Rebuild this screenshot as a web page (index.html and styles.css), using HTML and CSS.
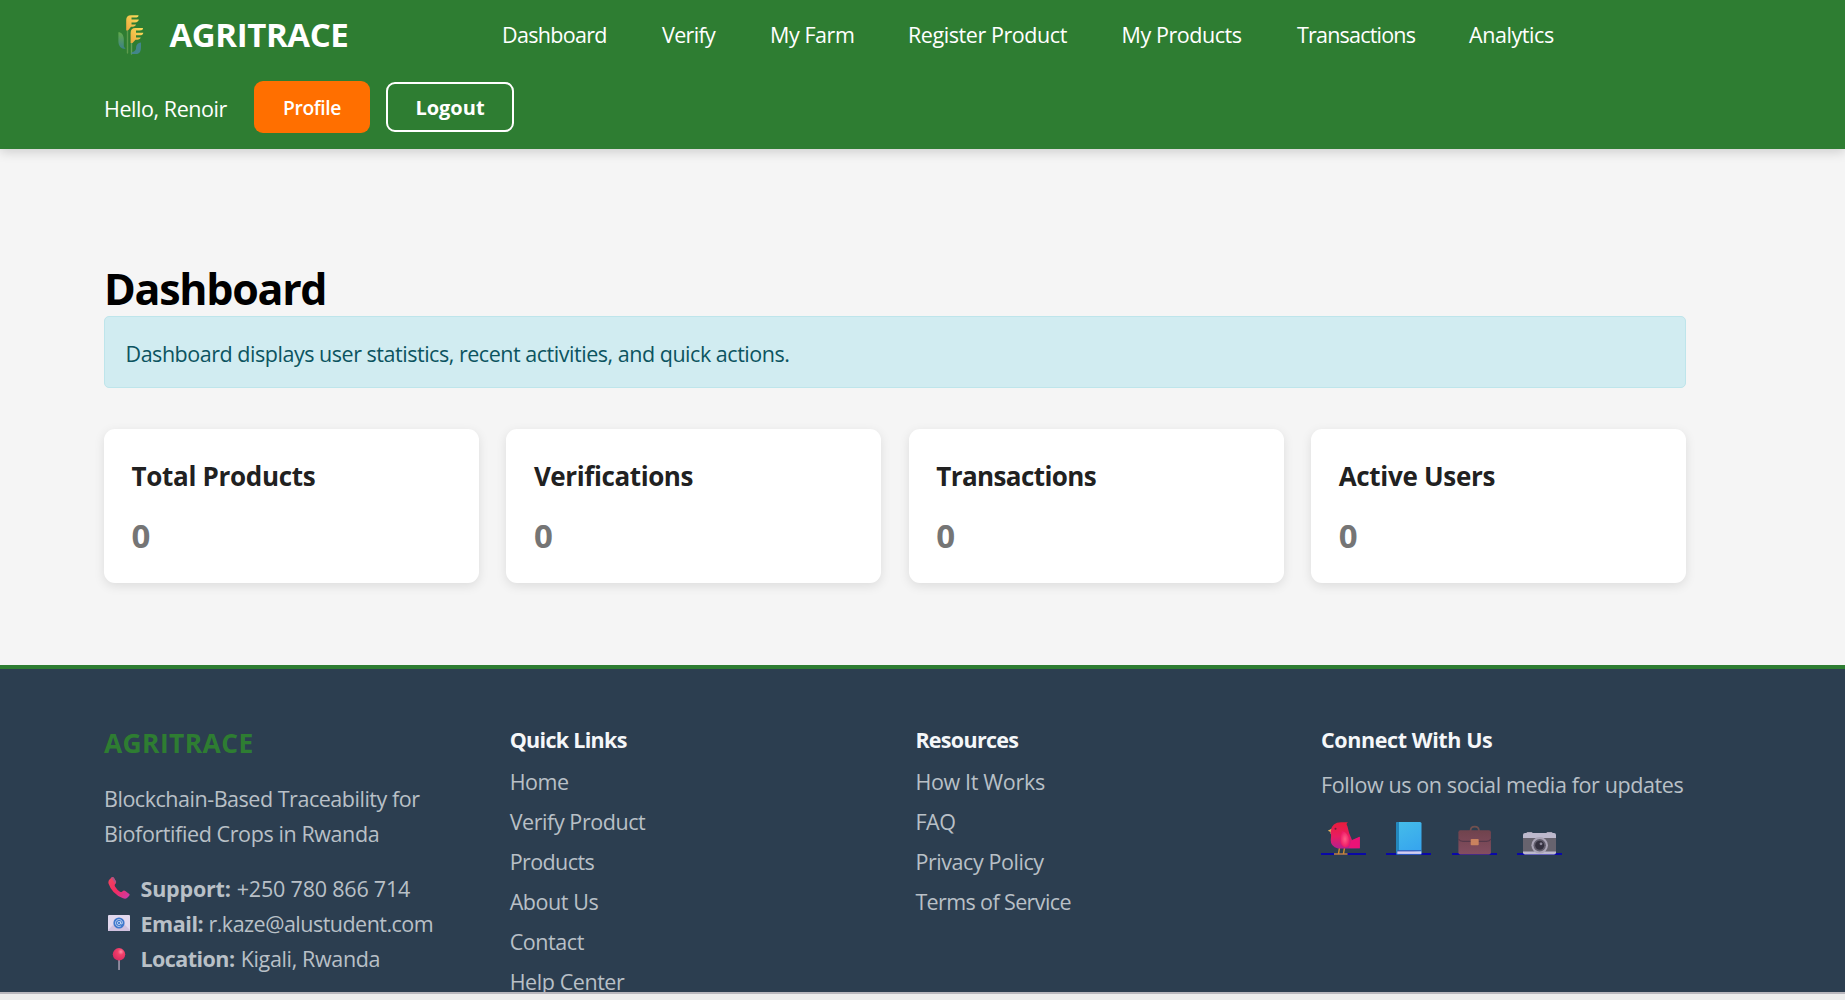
FILE: index.html
```html
<!DOCTYPE html>
<html lang="en">
<head>
<meta charset="utf-8">
<title>AGRITRACE - Dashboard</title>
<link rel="stylesheet" href="styles.css">
</head>
<body>
<div class="page">
  <header class="header">
    <div class="bar">
      <a class="brand">
        <svg class="logo" viewBox="0 0 60 60" fill="none" stroke-linecap="round" stroke-linejoin="round">
          <defs>
            <linearGradient id="leaf" x1="0" y1="0" x2="0" y2="1"><stop offset="0" stop-color="#62a94c"/><stop offset="1" stop-color="#3d7f86"/></linearGradient>
            <linearGradient id="ear" x1="0" y1="1" x2="1" y2="0"><stop offset="0" stop-color="#eda83e"/><stop offset="1" stop-color="#fbe05c"/></linearGradient>
          </defs>
          <path d="M22.5 26V48" stroke="#5c9a4c" stroke-width="1.4"/>
          <path d="M26.5 38V49" stroke="#63a05a" stroke-width="1.4"/>
          <path d="M13.4 27.3C16.5 27.3 18.6 30 18.8 34V41.5L20.6 44C16 44 13.4 41 13.4 36.500Z" fill="url(#leaf)"/>
          <path d="M36 37.500C32 38 31 40.500 31 44C30 46.500 28 47 26.500 47.500V49H31C34.500 49 36 46.500 36 42Z" fill="#42868a"/>
          <path d="M21.200 25.500V15Q21.200 10.200 26 10.200H33.500Q33.800 12.600 30 12.600H26.500V14.600H33.800Q33.500 17.400 30 17.400H26.500V19.400H31Q30.500 21.700 26 21.700L23 25.500Z" fill="url(#ear)"/>
          <path d="M25.600 38V28Q25.600 23 30.400 23H38Q38.200 25.500 34.500 25.500H31V27.700H38.300Q38 30.300 34.500 30.300H31V32.400H35.700Q35.200 34.700 30.500 34.700L27.500 38Z" fill="url(#ear)"/>
        </svg>
        <span class="brand-name">AGRITRACE</span>
      </a>
      <nav class="nav">
        <a class="snug">Dashboard</a><a class="snug">Verify</a><a>My Farm</a><a>Register Product</a><a>My Products</a><a class="tight">Transactions</a><a>Analytics</a>
      </nav>
    </div>
    <div class="user">
      <span class="hello">Hello, Renoir</span>
      <a class="btn btn-profile">Profile</a>
      <button class="btn btn-logout">Logout</button>
    </div>
  </header>

  <main class="main">
    <h1>Dashboard</h1>
    <div class="alert">Dashboard displays user statistics, recent activities, and quick actions.</div>
    <div class="cards">
      <section class="card"><h3 class="wide">Total Products</h3><p>0</p></section>
      <section class="card"><h3>Verifications</h3><p>0</p></section>
      <section class="card"><h3 class="snug">Transactions</h3><p>0</p></section>
      <section class="card"><h3 class="wide">Active Users</h3><p>0</p></section>
    </div>
  </main>

  <footer class="footer">
    <div class="col about">
      <h3>AGRITRACE</h3>
      <p class="tagline">Blockchain-Based Traceability for<br><span class="wide">Biofortified Crops in Rwanda</span></p>
      <ul class="contact">
        <li>
          <svg viewBox="0 0 22 22"><defs><linearGradient id="ph" x1="0" y1="0" x2="1" y2="1"><stop offset="0" stop-color="#f0475f"/><stop offset=".5" stop-color="#f22c62"/><stop offset="1" stop-color="#c93cae"/></linearGradient></defs><path d="M1.500 2.500L3.800.3Q5-.3 6 1L8 4.500Q8.500 6 7 7.200Q6.300 8.200 7.200 9.800Q9 12.800 12 14.800Q13.300 15.500 14.300 14.500Q15.800 13 17.300 14L21 16.700Q22.300 17.800 21 19L19 21Q17.500 22.200 15 21.300Q4 17 .5 6.500Q0 4 1.500 2.500Z" fill="url(#ph)"/><path d="M3.800.3Q5-.3 6 1L8 4.500Q8.300 5.500 7.400 6.600L3.400.8Z" fill="#a95587"/></svg>
          <span><strong class="loose">Support:</strong> <span class="num">+250 780 866 714</span></span>
        </li>
        <li>
          <svg viewBox="0 0 22 22"><rect y="3" width="22" height="16" rx="1" fill="#e2d8ee"/><path d="M0 18V19H22V18L15 11H7Z" fill="#d0c1df"/><circle cx="11" cy="11" r="5.600" fill="#3f78cc"/><circle cx="11" cy="11" r="1.600" fill="none" stroke="#cfdef6" stroke-width=".8"/><path d="M12.700 9.300V11.500Q14.200 13 14.500 10.800A3.500 3.500 0 1 0 12.800 14" fill="none" stroke="#cfdef6" stroke-width=".8"/></svg>
          <span><strong>Email:</strong> <span class="mail">r.kaze@alustudent.com</span></span>
        </li>
        <li>
          <svg viewBox="0 0 22 22"><defs><radialGradient id="pin" cx=".65" cy=".3" r=".7"><stop offset="0" stop-color="#ff8da6"/><stop offset=".35" stop-color="#f2406a"/><stop offset="1" stop-color="#d92c62"/></radialGradient></defs><rect x="10.200" y="11" width="1.700" height="11" rx=".6" fill="#9a94a8"/><circle cx="11" cy="6.300" r="6.200" fill="url(#pin)"/></svg>
          <span><strong class="place">Location:</strong> <span class="city">Kigali, Rwanda</span></span>
        </li>
      </ul>
    </div>
    <div class="col">
      <h4 class="snug">Quick Links</h4>
      <ul class="links"><li>Home</li><li>Verify Product</li><li class="tight">Products</li><li>About Us</li><li>Contact</li><li>Help Center</li></ul>
    </div>
    <div class="col">
      <h4 class="snug">Resources</h4>
      <ul class="links"><li class="wide">How It Works</li><li>FAQ</li><li>Privacy Policy</li><li class="service">Terms of Service</li></ul>
    </div>
    <div class="col">
      <h4>Connect With Us</h4>
      <p class="follow">Follow us on social media for updates</p>
      <div class="social">
        <a><svg viewBox="0 0 45 36"><defs><linearGradient id="bird" x1="0" y1="0" x2="0" y2="1"><stop offset="0" stop-color="#e81d3c"/><stop offset=".55" stop-color="#e81c62"/><stop offset="1" stop-color="#b3208f"/></linearGradient><radialGradient id="wing"><stop offset="0" stop-color="#ff5f86"/><stop offset="1" stop-color="#ee1a68"/></radialGradient></defs><path d="M18.500 29L17.500 34.500M23.500 29L22.500 34.500M13 35H26.500" stroke="#c98a2e" stroke-width="1.400" fill="none"/><path d="M11 9.500L6.800 11.700L9.500 13V15L12 13Z" fill="#e8b35b"/><path d="M27 3.300Q24.500 4.500 26.500 7.500Q27.500 14 31 21L38.800 17.700V29.300L31 29.500H17Q9.500 27.500 9.700 21Q10.500 17 9.700 12Q11 3.300 20 3.300Z" fill="url(#bird)"/><path d="M21 12Q27 13 28.500 22Q29 29 23 28Q17 25 21 12Z" fill="url(#wing)"/><path d="M30 22L38.800 17.700V29.300L28 29Z" fill="#ec1277"/><circle cx="14.500" cy="9.700" r="1" fill="#6e2038"/></svg></a>
        <a><svg viewBox="0 0 45 36"><defs><linearGradient id="book" x1="0" y1="0" x2=".4" y2="1"><stop offset="0" stop-color="#45bde9"/><stop offset="1" stop-color="#37a6ee"/></linearGradient></defs><rect x="10" y="3" width="25.500" height="32.500" rx="1.500" fill="url(#book)"/><path d="M10 4.500Q10 3 11.500 3H13V35.500H11.500Q10 35.500 10 34Z" fill="#2387bd"/><path d="M35.500 32V31.300H12Q10.500 32 10.500 34Q10.500 35.500 12 35.500H35.500V34.700H12Z" fill="#3552b4"/><rect x="11.300" y="32.400" width="24" height="2.500" fill="#d3ccf0"/></svg></a>
        <a><svg viewBox="0 0 45 36"><defs><linearGradient id="bag" x1="0" y1="0" x2="0" y2="1"><stop offset="0" stop-color="#70434d"/><stop offset="1" stop-color="#844e61"/></linearGradient></defs><path d="M18.500 12Q18.500 7.700 22.700 7.700T27 12" fill="none" stroke="#70504f" stroke-width="1.700"/><rect x="6.400" y="11.300" width="32.500" height="24.200" rx="2" fill="url(#bag)"/><path d="M6.400 20Q8 22.300 11 22.300H34.500Q37.500 22.300 38.900 20" fill="none" stroke="#56384a" stroke-width="1.200"/><rect x="18.700" y="20" width="8" height="6.300" rx=".8" fill="#c9825e"/></svg></a>
        <a><svg viewBox="0 0 45 36"><rect x="9.500" y="13" width="6" height="3" rx="1" fill="#aaa6b8"/><rect x="29.500" y="13" width="6" height="3" rx="1" fill="#aaa6b8"/><rect x="6" y="14" width="33" height="21.500" rx="2" fill="#bdb9cd"/><rect x="6" y="19" width="33" height="13.500" fill="#67636e"/><circle cx="22.700" cy="26.300" r="8.300" fill="#aaa4b6"/><circle cx="22.700" cy="26.300" r="6.200" fill="#625e6d"/><circle cx="22.700" cy="26.300" r="4.500" fill="#34303f"/><circle cx="24" cy="24.800" r="1.400" fill="#8e899c"/></svg></a>
      </div>
    </div>
  </footer>
</div>
<div class="tray"></div>
</body>
</html>
```
FILE: styles.css
```css
* { box-sizing: border-box; margin: 0; padding: 0; }

body {
  height: 1000px;
  overflow: hidden;
  background: #f5f5f5;
  font-family: "Open Sans", "Noto Sans", sans-serif;
  font-size: 21.5px;
  line-height: 35.2px;
  letter-spacing: -0.43px;
}

ul { list-style: none; }

.page { height: 992px; overflow: hidden; }
.tray { height: 8px; background: #ededed; border-top: 2px solid #b9b7bd; }

/* Letter fitting */
.wide { letter-spacing: -0.33px; }
.tight { letter-spacing: -0.6px; }
.snug { letter-spacing: -0.68px; }
.service { letter-spacing: -0.62px; }

/* Header */
.header {
  height: 149px;
  padding-left: 104px;
  background: #2e7d32;
  color: #fff;
  box-shadow: 0 3px 11px rgba(0, 0, 0, 0.16);
}
.bar { display: flex; align-items: center; height: 81px; padding-bottom: 12px; }
.brand { display: flex; align-items: center; width: 398px; }
.logo { width: 60px; height: 60px; margin: 1px 4.500px 0 1px; }
.brand-name { font-size: 33px; font-weight: 700; letter-spacing: -0.4px; }
.nav {
  display: grid;
  grid-template-columns: 160px 108px 138px 213.500px 175.500px 172px auto;
}
.nav .tight { letter-spacing: -0.8px; }
.user { display: flex; align-items: center; height: 52px; }
.hello { width: 150px; padding-top: 4px; letter-spacing: -0.43px; }
.btn {
  display: flex;
  align-items: center;
  justify-content: center;
  padding-top: 2px;
  border: 0;
  border-radius: 9px;
  color: #fff;
  font-family: inherit;
  line-height: 30px;
}
.btn-profile {
  width: 116px;
  height: 52px;
  margin-right: 16px;
  background: #ff6f00;
  font-size: 19.300px;
  font-weight: 600;
  letter-spacing: -0.4px;
}
.btn-logout {
  width: 128px;
  height: 50px;
  border: 2px solid #fff;
  background: none;
  font-size: 20px;
  font-weight: 700;
  letter-spacing: 0;
}

/* Dashboard */
.main { height: 516px; width: 1686px; padding: 113px 0 0 104px; }
h1 {
  height: 54px;
  font-size: 43px;
  line-height: 54px;
  font-weight: 700;
  letter-spacing: -1.300px;
  color: #000;
}
.alert {
  height: 72px;
  padding: 19px 20.500px;
  border: 1px solid #bee5eb;
  border-radius: 5px;
  background: #d1ecf1;
  color: #0c5460;
  letter-spacing: -0.47px;
}
.cards {
  display: grid;
  grid-template-columns: repeat(4, 1fr);
  gap: 27.500px;
  margin-top: 41px;
}
.card {
  height: 154px;
  padding: 30px 27.500px;
  border-radius: 11px;
  background: #fff;
  box-shadow: 0 3px 11px rgba(0, 0, 0, 0.1);
}
.card h3 { font-size: 26px; letter-spacing: -0.4px; color: #212121; }
.card h3.wide { letter-spacing: -0.3px; }
.card h3.snug { letter-spacing: -0.6px; }
.card p {
  margin-top: 23.500px;
  font-size: 33px;
  font-weight: 700;
  color: #757575;
}

/* Footer */
.footer {
  display: grid;
  grid-template-columns: repeat(4, 365px);
  column-gap: 40.700px;
  height: 340px;
  padding: 53px 0 0 104px;
  border-top: 4px solid #2e7d32;
  background: #2c3e50;
  color: #b9c0c7;
}
.about h3 {
  padding-top: 4px;
  font-size: 26.400px;
  letter-spacing: 0.4px;
  color: #2e7d32;
}
.tagline { margin-top: 20px; letter-spacing: -0.47px; }
.tagline .wide { letter-spacing: -0.4px; }
.contact { margin-top: 19px; }
.contact li { display: flex; align-items: center; }
.contact svg { width: 22px; height: 22px; margin: 0 10.500px 0 4px; }
.contact .loose { letter-spacing: -0.2px; }
.contact .num { margin-left: 1px; letter-spacing: -0.2px; }
.contact .mail { letter-spacing: -0.52px; }
.contact .place { letter-spacing: -0.55px; }
.contact .city { margin-left: 1px; letter-spacing: -0.35px; }
h4 { color: #f5f7f9; letter-spacing: -0.4px; }
h4.snug { letter-spacing: -0.7px; }
.links { display: grid; row-gap: 4.800px; margin-top: 7px; }
.follow { margin-top: 10px; letter-spacing: -0.39px; white-space: nowrap; }
.social { display: flex; gap: 20.300px; margin-top: 16.500px; }
.social a {
  display: block;
  width: 45px;
  height: 36px;
  background: linear-gradient(#0a08a8, #0a08a8) bottom / 100% 2px no-repeat;
}
.social svg { display: block; width: 45px; height: 36px; }
```
